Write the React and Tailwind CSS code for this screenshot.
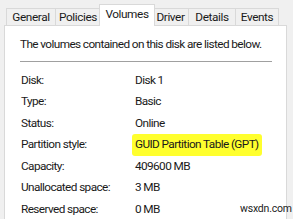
import React from 'react';

const tabs = [
  { name: 'General', w: 'w-[50px]' },
  { name: 'Policies', w: 'w-[46px]' },
  { name: 'Volumes', w: 'w-[56px]', active: true },
  { name: 'Driver', w: 'w-[37px]' },
  { name: 'Details', w: 'w-[48px]' },
  { name: 'Events', w: 'w-[44px]' },
];

const rows = [
  { label: 'Disk:', value: 'Disk 1' },
  { label: 'Type:', value: 'Basic' },
  { label: 'Status:', value: 'Online' },
  { label: 'Partition style:', value: 'GUID Partition Table (GPT)', mark: true },
  { label: 'Capacity:', value: '409600 MB' },
  { label: 'Unallocated space:', value: '3 MB' },
  { label: 'Reserved space:', value: '0 MB' },
];

const App = () => {
  return (
    <div
      className="relative w-[293px] h-[219px] overflow-hidden bg-[#f0f0f0] flex flex-col text-[11.8px] tracking-[-0.6px] text-[#1a1a1a]"
      style={{ fontFamily: 'Roboto, "Liberation Sans", sans-serif' }}
    >
      <div className="flex items-end pl-[6px] pt-[5px] h-[26px] shrink-0 tracking-[-0.4px]">
        {tabs.map(tab => (
          <div
            key={tab.name}
            className={
              tab.active
                ? `${tab.w} h-[22px] -mx-[2px] relative z-10 bg-white border border-b-0 border-[#d9d9d9] flex items-center justify-center pb-[2px] leading-none`
                : `${tab.w} h-[18px] shrink-0 bg-[#f0f0f0] border border-b-0 border-[#d9d9d9] -ml-px first:ml-0 flex items-center justify-center leading-none`
            }
          >
            {tab.name}
          </div>
        ))}
      </div>
      <div className="ml-[4px] w-[283px] flex-1 bg-white border-l border-t border-r border-[#d9d9d9] -mt-px pl-[15px] pt-[10px]">
        <p className="leading-[16px] whitespace-nowrap">The volumes contained on this disk are listed below.</p>
        <div className="mt-[9px] mr-[14px] h-px bg-[#a0a0a0]" />
        <div className="mt-[8px]">
          {rows.map(row => (
            <div key={row.label} className="flex items-center h-[21.5px] whitespace-nowrap">
              <span className="w-[115px] pl-px">{row.label}</span>
              <span className={row.mark ? 'bg-[#ffff2e] px-[3px] -ml-[3px] py-[2px] rounded-[3px]' : ''}>{row.value}</span>
            </div>
          ))}
        </div>
      </div>
      <span className="absolute left-[240px] top-[201px] text-[10.5px] tracking-[-0.2px] text-[#222]">wsxdn.com</span>
    </div>
  );
};

export default App;
